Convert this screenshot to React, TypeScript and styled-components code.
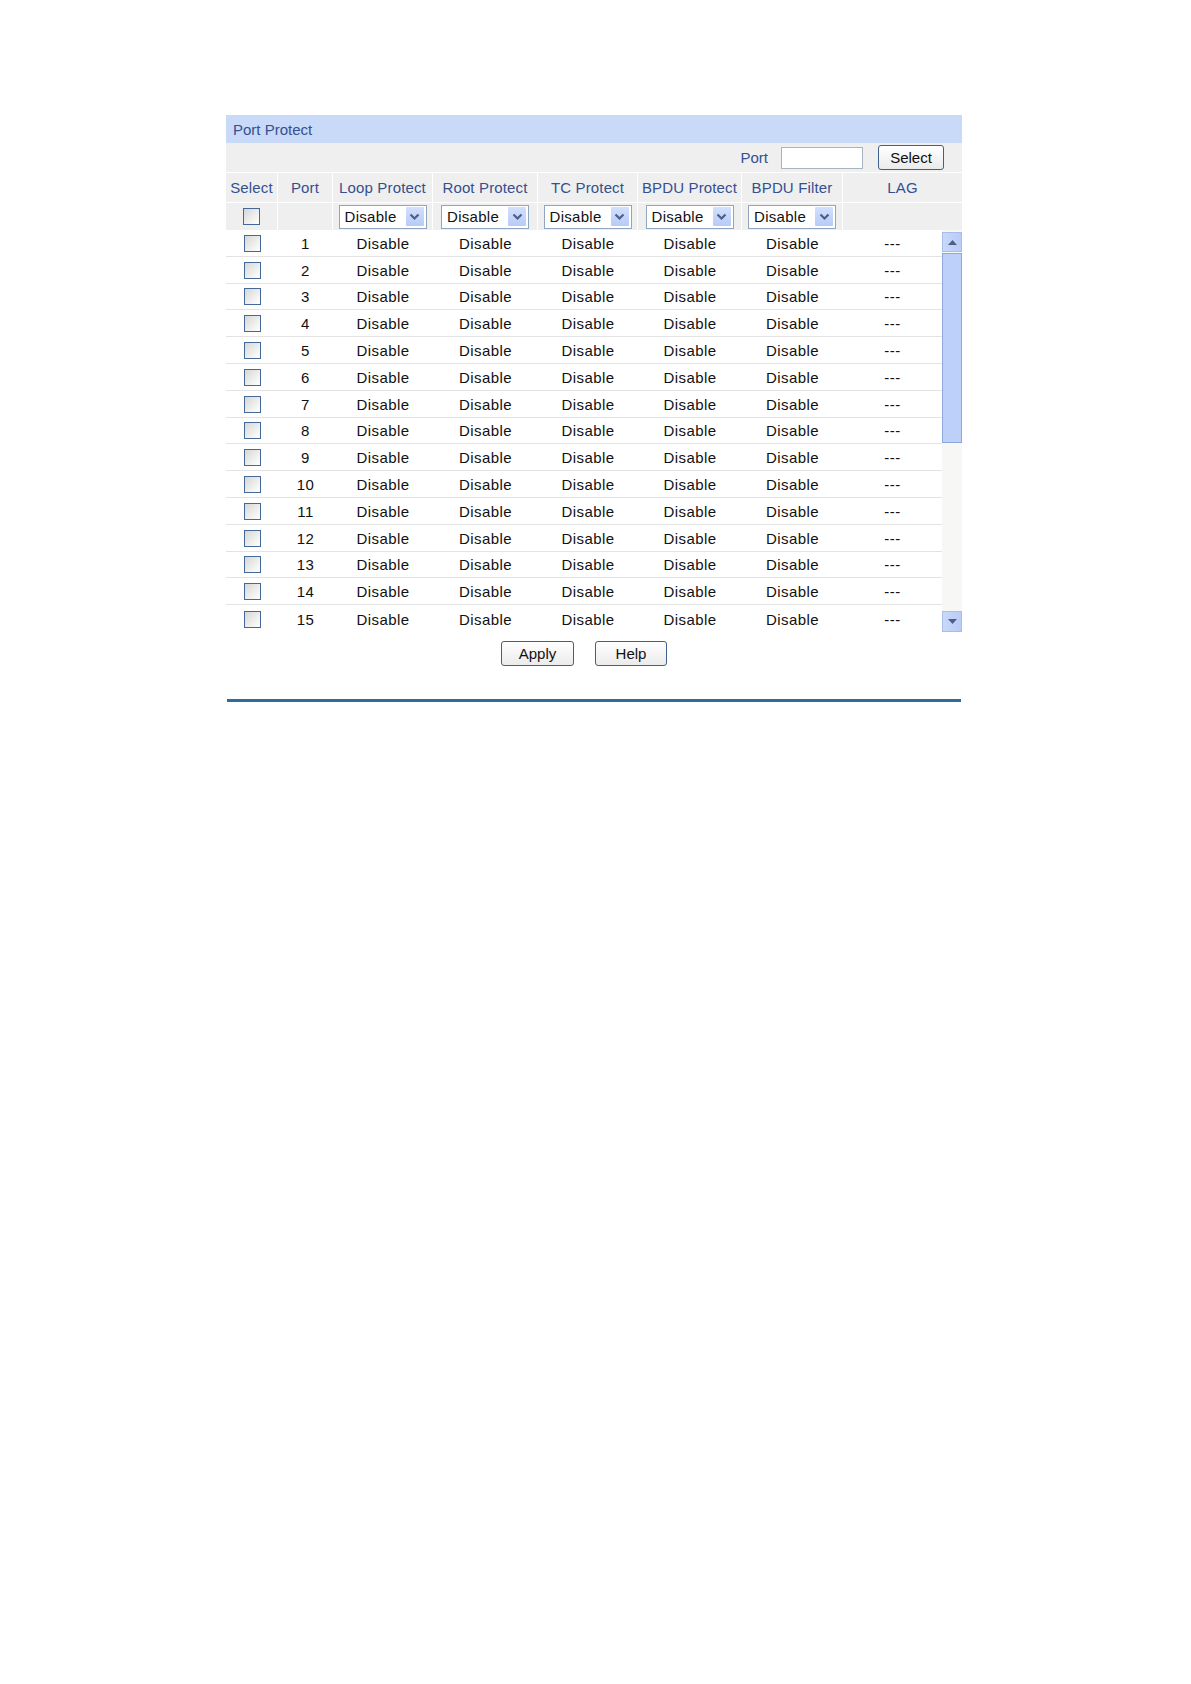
import React from 'react'
import styled, { createGlobalStyle } from 'styled-components'

const GlobalStyle = createGlobalStyle`
  body {
    margin: 0;
    background: #ffffff;
    font-family: "Liberation Sans", Arial, sans-serif;
  }
`

const COLS_HEAD = '52px 55px 100px 105px 100px 104px 101px 119px'
const COLS_BODY = '52px 55px 100px 105px 100px 104px 101px 99px'
const ROW_H = 26.8

const Page = styled.div`
  padding: 115px 0 40px 226px;
`

const Panel = styled.div`
  width: 736px;
`

const TitleBar = styled.div`
  height: 28px;
  display: flex;
  align-items: center;
  padding-left: 7px;
  background: #c9d9f8;
  color: #34508f;
  font-size: 15px;
`

const Toolbar = styled.div`
  height: 29px;
  display: flex;
  align-items: center;
  justify-content: flex-end;
  background: #efefef;
  padding-right: 18px;
`

const Label = styled.span`
  color: #34508f;
  font-size: 15px;
  margin-right: 13px;
`

const PortInput = styled.div`
  width: 82px;
  height: 22px;
  box-sizing: border-box;
  border: 1px solid #a9b4c2;
  background: #ffffff;
  margin-right: 15px;
`

const Button = styled.button<{ w: number }>`
  width: ${({ w }) => w}px;
  height: 25px;
  padding: 0;
  border: 1px solid #3f6189;
  border-radius: 3px;
  background: linear-gradient(#ffffff, #ebebeb);
  color: #111111;
  font-family: inherit;
  font-size: 15px;
`

const GridRow = styled.div<{ cols: string; h: number }>`
  display: grid;
  grid-template-columns: ${({ cols }) => cols};
  height: ${({ h }) => h}px;
  box-sizing: border-box;
`

const HeadRow = styled(GridRow)`
  background: #efefef;
  border-top: 1px solid #ffffff;
`

const HeadCell = styled.div`
  display: flex;
  align-items: center;
  justify-content: center;
  border-right: 1px solid #ffffff;
  color: #34508f;
  font-size: 15px;
  letter-spacing: 0.15px;
  white-space: nowrap;
  &:last-child {
    border-right: none;
  }
`

const Checkbox = styled.span`
  width: 17px;
  height: 17px;
  box-sizing: border-box;
  border: 1px solid #45689a;
  background: linear-gradient(135deg, #d6d6d4 0%, #f4f4f2 70%, #ffffff 100%);
`

const SelectBox = styled.div`
  width: 88px;
  height: 24px;
  box-sizing: border-box;
  display: flex;
  align-items: center;
  justify-content: space-between;
  border: 1px solid #8fa5c0;
  background: #ffffff;
  padding: 0 2px 0 5px;
  color: #111111;
  font-size: 15px;
  letter-spacing: 0.3px;
`

const ArrowBox = styled.span`
  width: 18px;
  height: 19px;
  display: flex;
  align-items: center;
  justify-content: center;
  background: linear-gradient(#d3e0fd, #b7cbf6);
  border-radius: 1px;
`

const Body = styled.div`
  display: flex;
  height: ${15 * ROW_H}px;
`

const Rows = styled.div`
  width: 716px;
  background: #ffffff;
`

const DataRow = styled(GridRow)`
  border-bottom: 1px solid #e3e3e3;
  &:last-child {
    border-bottom: none;
  }
`

const DataCell = styled.div`
  display: flex;
  align-items: center;
  justify-content: center;
  padding-top: 1px;
  color: #111111;
  font-size: 15px;
  letter-spacing: 0.45px;
`

const ScrollBar = styled.div`
  width: 20px;
  display: flex;
  flex-direction: column;
  background: #f7f7f5;
  padding-top: 2px;
  box-sizing: border-box;
`

const ScrollButton = styled.div<{ h: number }>`
  height: ${({ h }) => h}px;
  box-sizing: border-box;
  display: flex;
  align-items: center;
  justify-content: center;
  border: 1px solid #a8bde8;
  background: linear-gradient(90deg, #c9d8fb, #b9ccf6);
`

const Thumb = styled.div`
  height: 190px;
  margin-top: 1px;
  box-sizing: border-box;
  border: 1px solid #8ea8dc;
  background: #bcd0fa;
`

const Spacer = styled.div`
  flex: 1;
`

const Footer = styled.div`
  width: 716px;
  display: flex;
  justify-content: center;
  gap: 21px;
  padding-top: 9px;
`

const Divider = styled.div`
  width: 734px;
  height: 3px;
  margin: 33px 0 0 1px;
  background: #2f6b9b;
`

const Chevron = () => (
  <svg width="11" height="8" viewBox="0 0 11 8">
    <path d="M1.5 1.5 L5.5 5.5 L9.5 1.5" fill="none" stroke="#4a5f8a" strokeWidth="2.2" />
  </svg>
)

const Triangle = ({ up }: { up: boolean }) => (
  <svg width="9" height="5" viewBox="0 0 9 5">
    <path d={up ? 'M0 5 L4.5 0 L9 5 Z' : 'M0 0 L4.5 5 L9 0 Z'} fill="#4d5f86" />
  </svg>
)

const Dropdown = () => (
  <SelectBox>
    Disable
    <ArrowBox>
      <Chevron />
    </ArrowBox>
  </SelectBox>
)

const headers = ['Select', 'Port', 'Loop Protect', 'Root Protect', 'TC Protect', 'BPDU Protect', 'BPDU Filter', 'LAG']
const ports = Array.from({ length: 15 }, (_, i) => i + 1)

export default function App() {
  return (
    <>
      <GlobalStyle />
      <Page>
        <Panel>
          <TitleBar>Port Protect</TitleBar>
          <Toolbar>
            <Label>Port</Label>
            <PortInput />
            <Button w={66}>Select</Button>
          </Toolbar>
          <HeadRow cols={COLS_HEAD} h={30}>
            {headers.map((h) => (
              <HeadCell key={h}>{h}</HeadCell>
            ))}
          </HeadRow>
          <HeadRow cols={COLS_HEAD} h={28}>
            <HeadCell>
              <Checkbox />
            </HeadCell>
            <HeadCell />
            {[0, 1, 2, 3, 4].map((i) => (
              <HeadCell key={i}>
                <Dropdown />
              </HeadCell>
            ))}
            <HeadCell />
          </HeadRow>
          <Body>
            <Rows>
              {ports.map((p) => (
                <DataRow key={p} cols={COLS_BODY} h={ROW_H}>
                  <DataCell>
                    <Checkbox />
                  </DataCell>
                  <DataCell>{p}</DataCell>
                  <DataCell>Disable</DataCell>
                  <DataCell>Disable</DataCell>
                  <DataCell>Disable</DataCell>
                  <DataCell>Disable</DataCell>
                  <DataCell>Disable</DataCell>
                  <DataCell>---</DataCell>
                </DataRow>
              ))}
            </Rows>
            <ScrollBar>
              <ScrollButton h={20}>
                <Triangle up />
              </ScrollButton>
              <Thumb />
              <Spacer />
              <ScrollButton h={21}>
                <Triangle up={false} />
              </ScrollButton>
            </ScrollBar>
          </Body>
          <Footer>
            <Button w={73}>Apply</Button>
            <Button w={72}>Help</Button>
          </Footer>
          <Divider />
        </Panel>
      </Page>
    </>
  )
}
